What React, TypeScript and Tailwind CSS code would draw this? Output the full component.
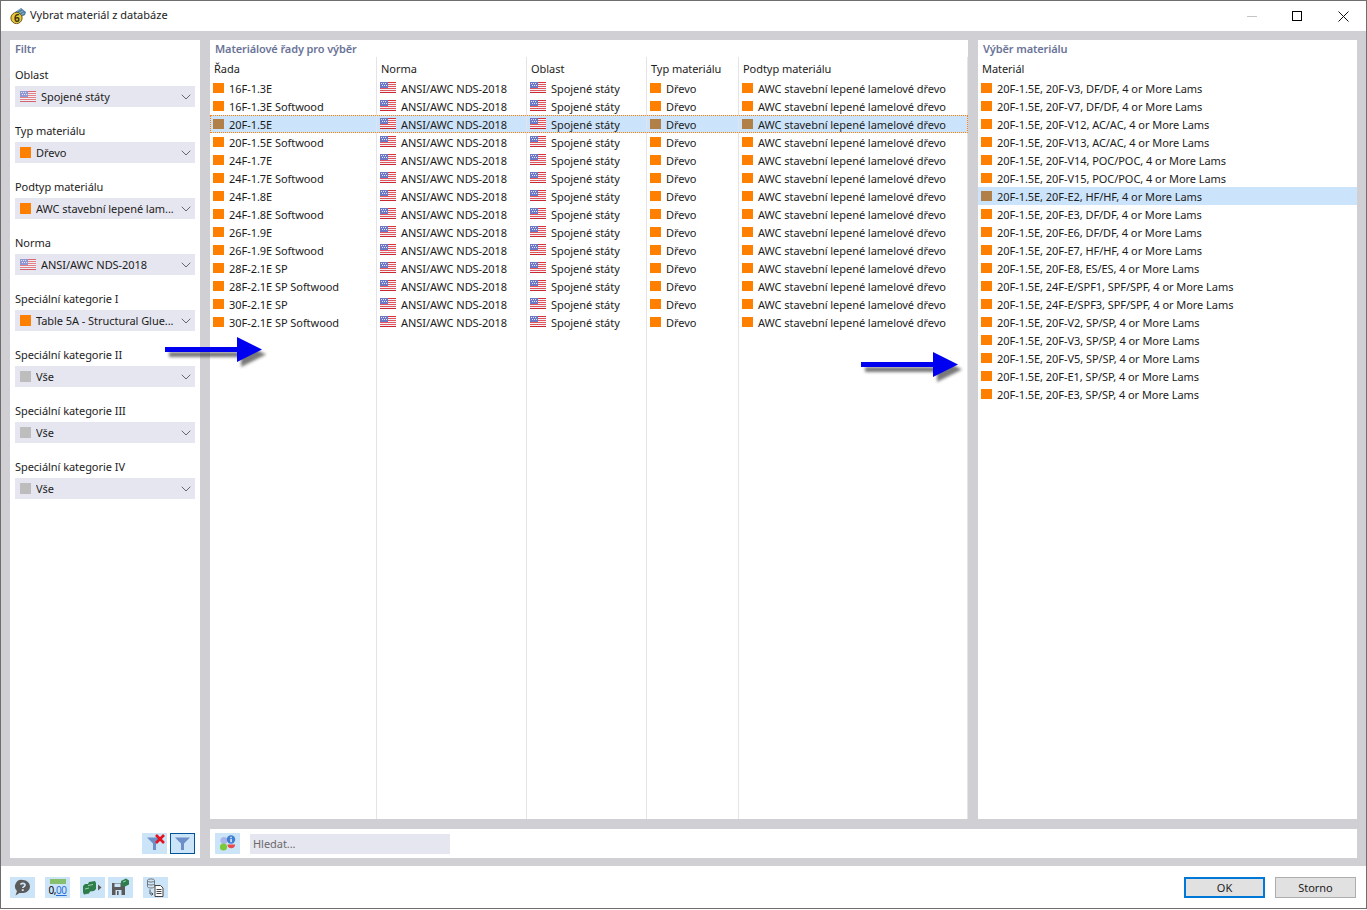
import { ChevronDown } from "lucide-react";

const series = [
  "16F-1.3E",
  "16F-1.3E Softwood",
  "20F-1.5E",
  "20F-1.5E Softwood",
  "24F-1.7E",
  "24F-1.7E Softwood",
  "24F-1.8E",
  "24F-1.8E Softwood",
  "26F-1.9E",
  "26F-1.9E Softwood",
  "28F-2.1E SP",
  "28F-2.1E SP Softwood",
  "30F-2.1E SP",
  "30F-2.1E SP Softwood",
];

const materials = [
  "20F-1.5E, 20F-V3, DF/DF, 4 or More Lams",
  "20F-1.5E, 20F-V7, DF/DF, 4 or More Lams",
  "20F-1.5E, 20F-V12, AC/AC, 4 or More Lams",
  "20F-1.5E, 20F-V13, AC/AC, 4 or More Lams",
  "20F-1.5E, 20F-V14, POC/POC, 4 or More Lams",
  "20F-1.5E, 20F-V15, POC/POC, 4 or More Lams",
  "20F-1.5E, 20F-E2, HF/HF, 4 or More Lams",
  "20F-1.5E, 20F-E3, DF/DF, 4 or More Lams",
  "20F-1.5E, 20F-E6, DF/DF, 4 or More Lams",
  "20F-1.5E, 20F-E7, HF/HF, 4 or More Lams",
  "20F-1.5E, 20F-E8, ES/ES, 4 or More Lams",
  "20F-1.5E, 24F-E/SPF1, SPF/SPF, 4 or More Lams",
  "20F-1.5E, 24F-E/SPF3, SPF/SPF, 4 or More Lams",
  "20F-1.5E, 20F-V2, SP/SP, 4 or More Lams",
  "20F-1.5E, 20F-V3, SP/SP, 4 or More Lams",
  "20F-1.5E, 20F-V5, SP/SP, 4 or More Lams",
  "20F-1.5E, 20F-E1, SP/SP, 4 or More Lams",
  "20F-1.5E, 20F-E3, SP/SP, 4 or More Lams",
];

const filters = [
  { label: "Oblast", value: "Spojené státy", icon: "flag" },
  { label: "Typ materiálu", value: "Dřevo", icon: "orange" },
  { label: "Podtyp materiálu", value: "AWC stavební lepené lam...", icon: "orange" },
  { label: "Norma", value: "ANSI/AWC NDS-2018", icon: "flag" },
  { label: "Speciální kategorie I", value: "Table 5A - Structural Glue...", icon: "orange" },
  { label: "Speciální kategorie II", value: "Vše", icon: "gray" },
  { label: "Speciální kategorie III", value: "Vše", icon: "gray" },
  { label: "Speciální kategorie IV", value: "Vše", icon: "gray" },
];

function Flag({ dim }: { dim?: boolean }) {
  return (
    <svg
      width="16"
      height="11"
      viewBox="0 0 16 11"
      className={`shrink-0 ${dim ? "opacity-70" : "mb-px"}`}
    >
      <rect width="16" height="11" fill="#f4f4f8" />
      <rect y="0" width="16" height="1" fill="#d8343c" />
      <rect y="2" width="16" height="1" fill="#e0565c" />
      <rect y="4" width="16" height="1" fill="#e0565c" />
      <rect y="6" width="16" height="1" fill="#e0565c" />
      <rect y="8" width="16" height="1" fill="#e0565c" />
      <rect y="10" width="16" height="1" fill="#c92a32" />
      <rect width="8" height="6" fill="#6d79c4" />
      <path d="M1 1.5h1M3 1.5h1M5 1.5h1M2 3.5h1M4 3.5h1M6 3.5h1" stroke="#dfe3f7" strokeWidth="1" />
    </svg>
  );
}

function Swatch({ color, tall }: { color: string; tall?: boolean }) {
  return (
    <span
      className={`w-[11px] shrink-0 ${tall ? "h-[11px]" : "h-[10px]"}`}
      style={{ backgroundColor: color }}
    />
  );
}

function Combo({ value, icon }: { value: string; icon: string }) {
  return (
    <div className="flex h-[21px] items-center bg-[#e6e6f0] pl-[5px] pr-px">
      {icon === "flag" ? <Flag dim /> : <Swatch tall color={icon === "orange" ? "#ff8000" : "#bdbdbd"} />}
      <span className="ml-[5px] min-w-0 flex-1 truncate whitespace-nowrap leading-[16px]">{value}</span>
      <ChevronDown size={16} strokeWidth={1.2} className="shrink-0 text-[#444]" />
    </div>
  );
}

function Cell({
  selected,
  children,
}: {
  selected?: boolean;
  children: React.ReactNode;
}) {
  return (
    <div className={`flex h-[18px] items-center whitespace-nowrap pl-[3px] ${selected ? "bg-[#cce4fb]" : ""}`}>
      {children}
    </div>
  );
}

function Column({
  title,
  className,
  render,
}: {
  title: string;
  className: string;
  render: (i: number) => React.ReactNode;
}) {
  return (
    <div className={`border-r border-[#e4e4e8] last:border-r-0 ${className}`}>
      <div className="flex h-[22px] items-center pl-1">{title}</div>
      {series.map((_, i) => (
        <Cell key={i} selected={i === 2}>
          {render(i)}
        </Cell>
      ))}
    </div>
  );
}

function ToolButton({ children, active }: { children: React.ReactNode; active?: boolean }) {
  return (
    <div
      className={`flex h-[21px] w-[25px] items-center justify-center bg-[#cce4f7] ${
        active ? "border border-[#005499]" : ""
      }`}
    >
      {children}
    </div>
  );
}

function Funnel() {
  return (
    <svg width="15" height="13" viewBox="0 0 15 13">
      <path d="M0 .5h15L9 6.5V13H6V6.5z" fill="#6d8fc9" />
    </svg>
  );
}

function Arrow({ id, className }: { id: string; className: string }) {
  const shape = "M2 15h72V5l25 12.5L74 30V20H2z";
  return (
    <svg width="110" height="44" viewBox="0 0 110 44" className={`absolute ${className}`}>
      <filter id={id} x="-10%" y="-30%" width="120%" height="160%">
        <feGaussianBlur stdDeviation="1.4" />
      </filter>
      <path d={shape} fill="#333" opacity="0.65" transform="translate(4 5)" filter={`url(#${id})`} />
      <path d={shape} fill="#0000f0" />
    </svg>
  );
}

const sectionTitle = "flex h-[17px] items-center pl-[5px] font-semibold tracking-[-0.12px] text-[#6b7498]";

export default function App() {
  return (
    <div className="h-[910px] w-[1367px] overflow-hidden bg-white">
      <div className="relative flex h-[909px] w-[1367px] flex-col overflow-hidden border border-[#6e6e6e] bg-white text-[11px] leading-none tracking-[-0.05px] text-[#1c1c1c] font-['Noto_Sans',sans-serif]">
        <div className="flex h-[30px] shrink-0 items-center bg-white pl-2">
          <svg width="18" height="18" viewBox="0 0 18 18">
            <path d="M6 5 12 1l5 4-1 3-6 3z" fill="#4f7f9f" />
            <path d="M8 4l4-2M10 6l4-2M12 8l3-2" stroke="#a9c4d6" strokeWidth="0.8" />
            <circle cx="7.5" cy="11" r="5.6" fill="#e8c93c" stroke="#6b5a14" />
            <text x="5" y="14.7" fontSize="10" fontWeight="700" fill="#3a3310">6</text>
          </svg>
          <span className="mb-[3px] ml-[3px] tracking-normal">Vybrat materiál z databáze</span>
          <div className="ml-auto flex items-center">
            <span className="mr-[35px] h-px w-[10px] bg-[#c4c4c4]" />
            <span className="mr-[36px] size-[10px] border border-black" />
            <svg width="11" height="11" viewBox="0 0 11 11" className="mr-[17px]">
              <path d="M.5.5l10 10M10.5.5l-10 10" stroke="#111" strokeWidth="1" />
            </svg>
          </div>
        </div>

        <div className="flex h-[835px] shrink-0 gap-[10px] bg-[#d0cfd4] pb-[8px] pl-[9px] pr-[9px] pt-[9px]">
          <div className="flex w-[190px] shrink-0 flex-col bg-white">
            <div className={sectionTitle}>Filtr</div>
            <div className="mt-[2px] flex flex-col gap-[8px] px-[5px]">
              {filters.map((f) => (
                <div key={f.label}>
                  <div className="flex h-[27px] items-center pt-[4px]">{f.label}</div>
                  <Combo value={f.value} icon={f.icon} />
                </div>
              ))}
            </div>
            <div className="mb-[4px] mt-auto flex justify-end gap-[3px] px-[5px]">
              <ToolButton>
                <div className="relative flex">
                  <Funnel />
                  <svg width="10" height="10" viewBox="0 0 10 10" className="absolute -right-[3px] -top-[3px]">
                    <path d="M1 1l8 8M9 1L1 9" stroke="#e5131d" strokeWidth="2.6" />
                  </svg>
                </div>
              </ToolButton>
              <ToolButton active>
                <Funnel />
              </ToolButton>
            </div>
          </div>

          <div className="flex min-w-0 flex-1 flex-col gap-[10px]">
            <div className="flex h-[779px] gap-[10px]">
              <div className="flex w-[758px] shrink-0 flex-col bg-white">
                <div className={sectionTitle}>Materiálové řady pro výběr</div>
                <div className="relative flex flex-1 items-stretch">
                  <Column
                    title="Řada"
                    className="w-[167px]"
                    render={(i) => (
                      <>
                        <Swatch color={i === 2 ? "#b08048" : "#ff8000"} />
                        <span className="ml-[5px]">{series[i]}</span>
                      </>
                    )}
                  />
                  <Column
                    title="Norma"
                    className="w-[150px]"
                    render={() => (
                      <>
                        <Flag />
                        <span className="ml-[5px]">ANSI/AWC NDS-2018</span>
                      </>
                    )}
                  />
                  <Column
                    title="Oblast"
                    className="w-[120px]"
                    render={() => (
                      <>
                        <Flag />
                        <span className="ml-[5px]">Spojené státy</span>
                      </>
                    )}
                  />
                  <Column
                    title="Typ materiálu"
                    className="w-[92px]"
                    render={(i) => (
                      <>
                        <Swatch color={i === 2 ? "#b08048" : "#ff8000"} />
                        <span className="ml-[5px]">Dřevo</span>
                      </>
                    )}
                  />
                  <Column
                    title="Podtyp materiálu"
                    className="flex-1"
                    render={(i) => (
                      <>
                        <Swatch color={i === 2 ? "#b08048" : "#ff8000"} />
                        <span className="ml-[5px]">AWC stavební lepené lamelové dřevo</span>
                      </>
                    )}
                  />
                  <div className="pointer-events-none absolute left-0 right-0 top-[58px] h-[18px] border border-dotted border-[#ff8000]" />
                </div>
              </div>

              <div className="flex min-w-0 flex-1 flex-col bg-white">
                <div className={sectionTitle}>Výběr materiálu</div>
                <div className="flex h-[22px] items-center pl-1">Materiál</div>
                {materials.map((m, i) => (
                  <Cell key={m + i} selected={i === 6}>
                    <Swatch color={i === 6 ? "#b08048" : "#ff8000"} />
                    <span className="ml-[5px]">{m}</span>
                  </Cell>
                ))}
              </div>
            </div>

            <div className="flex h-[29px] items-center bg-white pl-[5px]">
              <ToolButton>
                <svg width="17" height="17" viewBox="0 0 17 17">
                  <circle cx="5" cy="5.5" r="3.6" fill="#a8b4ea" />
                  <circle cx="4.5" cy="12" r="3.6" fill="#7ac93a" />
                  <path d="M8.5 9.5h7.5a3.7 3.7 0 0 1-7.5 0z" fill="#e94a4a" />
                  <circle cx="12" cy="4.5" r="4.2" fill="#3f7fd0" />
                  <rect x="11.4" y="3.8" width="1.3" height="3.4" fill="#fff" />
                  <rect x="11.4" y="1.8" width="1.3" height="1.2" fill="#fff" />
                </svg>
              </ToolButton>
              <div className="ml-[10px] flex h-[20px] w-[200px] items-center bg-[#e6e6f0] pl-[3px] text-[#6a6a6a]">
                Hledat...
              </div>
            </div>
          </div>
        </div>

        <div className="flex flex-1 items-center bg-white pl-[9px] pr-[10px]">
          <ToolButton>
            <svg width="19" height="17" viewBox="0 0 19 17">
              <path d="M10 1a7 6.5 0 0 1 0 13H6.5L2.5 16.5 4 12A6.5 6.5 0 0 1 10 1z" fill="#5a5a5a" />
              <path d="M7.6 5.6c.3-1.5 4.4-1.8 4.4.4 0 1.6-2.2 1.6-2.2 3" fill="none" stroke="#cce4f7" strokeWidth="1.7" />
              <rect x="8.8" y="10.2" width="1.9" height="1.8" fill="#cce4f7" />
            </svg>
          </ToolButton>
          <div className="ml-[10px] flex h-[21px] w-[25px] flex-col items-center justify-center bg-[#cce4f7]">
            <span className="h-[5px] w-[16px] bg-[#86c06c]" />
            <span className="text-[10px] leading-[12px] tracking-[-0.4px] text-black">
              0,<span className="text-[#2a6fd6] underline">00</span>
            </span>
          </div>
          <div className="ml-[10px]">
            <ToolButton>
              <svg width="21" height="15" viewBox="0 0 21 15">
                <path d="M1 6l2-2 3 0 1-2 6-1 1 2v6l-2 2-4 .5-1 2-5 1-1-2z" fill="#2f7d4a" />
                <path d="M6 5.5l5-1M3 9l4-1" stroke="#9bd6ae" strokeWidth="1" />
                <path d="M16 4.5l3.5 3-3.5 3z" fill="#5a5a5a" />
              </svg>
            </ToolButton>
          </div>
          <div className="ml-[3px]">
            <ToolButton>
              <svg width="21" height="19" viewBox="0 0 21 19">
                <path d="M2 5h11l2 2v10H2z" fill="#5a5a5a" />
                <rect x="4.5" y="5.5" width="6" height="3.5" fill="#cce4f7" />
                <rect x="5.5" y="12" width="6" height="5" fill="#cce4f7" />
                <rect x="7" y="13" width="1.6" height="4" fill="#5a5a5a" />
                <path d="M11 3l5-2.5 3 2v4l-5 2.5-3-2z" fill="#2f7d4a" />
                <path d="M13 4l3-1.2" stroke="#9bd6ae" strokeWidth="1" />
              </svg>
            </ToolButton>
          </div>
          <div className="ml-[10px]">
            <ToolButton>
              <svg width="21" height="19" viewBox="0 0 21 19">
                <ellipse cx="6" cy="2.5" rx="3.5" ry="1.6" fill="none" stroke="#777" />
                <path d="M2.5 2.5v6c0 2 7 2 7 0v-6M2.5 5.5c0 2 7 2 7 0" fill="none" stroke="#777" />
                <path d="M5 11.5v4.5h3M6.5 14.5l1.5 1.5-1.5 1.5" fill="none" stroke="#555" />
                <path d="M10 7.5h5.5l2.5 2.5v8.5h-8z" fill="#fff" stroke="#444" />
                <path d="M11.5 11.5h5M11.5 13.5h5M11.5 15.5h5" stroke="#444" />
              </svg>
            </ToolButton>
          </div>
          <div className="ml-auto flex gap-[10px]">
            <button className="h-[21px] w-[81px] border-2 border-[#0078d7] bg-[#e1e1e1]">OK</button>
            <button className="h-[21px] w-[81px] border border-[#adadad] bg-[#e1e1e1]">Storno</button>
          </div>
        </div>

        <Arrow id="arrow-left" className="left-[162px] top-[331px]" />
        <Arrow id="arrow-right" className="left-[858px] top-[346px]" />
      </div>
    </div>
  );
}
